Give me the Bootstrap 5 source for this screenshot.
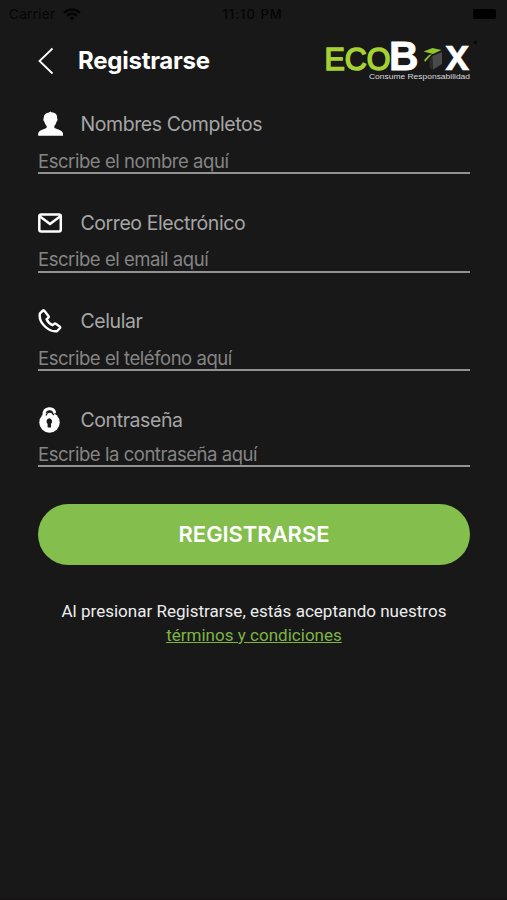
<!DOCTYPE html>
<html lang="es">
<head>
<meta charset="utf-8">
<meta name="viewport" content="width=device-width, initial-scale=1">
<title>Registrarse</title>
<link href="https://cdn.jsdelivr.net/npm/bootstrap@5.3.0/dist/css/bootstrap.min.css" rel="stylesheet">
<style>
body{background:#181818;color:#fff;font-family:Inter,"Liberation Sans",sans-serif;min-height:900px;border-bottom:1px solid #1c0f14}
.status-bar{height:28px;padding:0 11px 0 9px;color:#050505;font-size:13.5px;line-height:28px;grid-template-columns:1fr auto 1fr}
.carrier{letter-spacing:.3px}
.status-clock{font-size:13px;font-weight:500;letter-spacing:1px}
.battery{width:23px;height:10px;background:#000;border-radius:2px}
.screen{padding:0 37px 0 38px}
.top-row{height:66px}
.screen-title{font-size:24px;font-weight:700;letter-spacing:-.25px;line-height:30px;margin-left:24px}
.brand-logo{margin:0 -8px 0 0;overflow:visible}
.field{height:98.5px;padding-top:16px}
.field-label{height:28px;font-size:19.5px;color:#a6a6a6;line-height:28px;gap:17.5px;letter-spacing:-.42px}
.field-input,.field-input:focus{height:26px;margin-top:10px;padding:1px 0 0;border:0;border-bottom:2px solid #929292;border-radius:0;background:transparent;color:#fff;font-size:18.5px;letter-spacing:-.45px;line-height:23px;box-shadow:none}
.field-input::placeholder{color:#858585;opacity:1}
.field:last-of-type{height:98px}
.field:last-of-type .field-input{margin-top:7.5px}
.btn-register,.btn-register:hover{height:61px;margin-top:16px;background:#84be4d;color:#fff;font-size:22px;font-weight:600;letter-spacing:-.05px}
.terms{margin-top:34.5px;font-family:Roboto,sans-serif;font-size:17.05px;line-height:24px;color:#ededed}
.terms a{color:#7db544}
</style>
<script src="https://cdn.jsdelivr.net/npm/bootstrap@5.3.0/dist/js/bootstrap.bundle.min.js"></script>
</head>
<body>
<div class="status-bar d-grid align-items-center">
  <div class="d-flex align-items-center"><span class="carrier me-2">Carrier</span>
    <svg width="18" height="13" viewBox="0 0 19 14" fill="none" stroke="#050505" stroke-width="2.6"><path d="M1 5.2a12 12 0 0 1 17 0M4.2 8.4a7.500 7.500 0 0 1 10.600 0"/><path d="M6.800 10.600a4 4 0 0 1 5.400 0L9.500 13.500z" fill="#050505" stroke="none"/></svg>
  </div>
  <span class="status-clock">11:10 PM</span>
  <span class="battery ms-auto"></span>
</div>
<main class="screen">
  <header class="top-row d-flex align-items-center">
    <svg width="16" height="28" viewBox="0 0 16 28" fill="none" stroke="#fff" stroke-width="1.8"><path d="M14.500 1.500 1.500 14l13 12.500"/></svg>
    <h1 class="screen-title mb-0">Registrarse</h1>
    <svg class="brand-logo ms-auto" width="156" height="46" viewBox="322 38 156 46" font-family="Liberation Sans, sans-serif">
      <text x="324.500" y="70" font-size="30.500" fill="#a6d133" stroke="#a6d133" stroke-width="1.500" textLength="66" lengthAdjust="spacingAndGlyphs">ECO</text>
      <text x="389" y="70" font-size="40" font-weight="700" fill="#fff" stroke="#fff" stroke-width=".8" textLength="29.500" lengthAdjust="spacingAndGlyphs">B</text>
      <path d="m423.500 51.500 9-3.500 9 2-8.500 4z" fill="#8fc52e"/><path d="m432 54-7 8-.8-2 4.800-5z" fill="#8fc52e"/>
      <path d="m432 56 10-4v12l-9 5.500z" fill="#4a4a4a"/><path d="m429.500 59 3-3.500v14l-3-2z" fill="#2b2b2b"/>
      <text x="445" y="70" font-size="44" font-weight="700" fill="#fff" stroke="#fff" stroke-width=".3" textLength="24.500" lengthAdjust="spacingAndGlyphs">x</text>
      <text x="369" y="79" font-size="7.800" fill="#ddd" textLength="101" lengthAdjust="spacingAndGlyphs">Consume Responsabilidad</text>
      <circle cx="475.500" cy="42.500" r="1.800" fill="#090909"/>
    </svg>
  </header>
  <form>
    <div class="field">
      <label class="field-label d-flex align-items-center" for="nombre">
        <svg width="25" height="26" viewBox="0 0 25 26" fill="#fff"><path d="M5.800 7C5.800 3 8.200 1.800 11 1.400l1.700-.9.600.8c4 .3 6.200 2.200 5.800 6.200.8.500.5 2.600-.6 3.200-.4 2-1.300 3.300-2.200 4.200v1.600c1.500 2 8.400 2 8.700 6.100v2.200H.2v-2.200c.3-4.100 7-4.100 8.500-6.100v-1.600c-1-.9-1.900-2.200-2.300-4.200-1.100-.6-1.400-2.900-.6-3.700z"/></svg>
        <span>Nombres Completos</span></label>
      <input class="form-control field-input" id="nombre" placeholder="Escribe el nombre aquí">
    </div>
    <div class="field">
      <label class="field-label d-flex align-items-center" for="email">
        <svg width="25" height="22" viewBox="0 0 25 22" fill="none" stroke="#fff" stroke-width="2.500" stroke-linejoin="round"><rect x="1.300" y="2.400" width="21.500" height="17" rx="2"/><path d="m2 4.500 10 7.500L22 4.500"/></svg>
        <span>Correo Electrónico</span></label>
      <input class="form-control field-input" id="email" type="email" placeholder="Escribe el email aquí">
    </div>
    <div class="field">
      <label class="field-label d-flex align-items-center" for="celular">
        <svg width="25" height="24" viewBox="0 0 25 24" fill="none" stroke="#fff" stroke-width="2.400" stroke-linejoin="round"><path d="M5 1.500 2 4.300C1 8.500 3 13.500 6.500 17c3.700 3.800 8 5.800 12.500 5.200l3-3.200c.4-.6.300-1-.2-1.400l-4-2.900c-.6-.4-1.200-.3-1.600.1l-1.600 1.400c-2.600-1-4.800-3.200-6-6l1.800-1.500c.5-.4.500-.9.200-1.400L6.500 1.900C6.100 1.300 5.600 1.100 5 1.500z"/></svg>
        <span>Celular</span></label>
      <input class="form-control field-input" id="celular" type="tel" placeholder="Escribe el teléfono aquí">
    </div>
    <div class="field">
      <label class="field-label d-flex align-items-center" for="clave">
        <svg width="25" height="26" viewBox="0 0 25 26"><path d="M6 11V7.500C6 0 15.500.5 16.500 5" fill="none" stroke="#fff" stroke-width="3" stroke-linecap="round"/><circle cx="11.500" cy="15.500" r="10.200" fill="#fff"/><path d="M8 8.500c1-4 5-4 6.500-2L16 8" fill="none" stroke="#181818" stroke-width="1.200"/><path d="M11.300 11.300a3.200 3.200 0 0 1 1.700 5.600v3.600H9.600v-3.600a3.200 3.200 0 0 1 1.700-5.600z" fill="#181818"/></svg>
        <span>Contraseña</span></label>
      <input class="form-control field-input" id="clave" type="password" placeholder="Escribe la contraseña aquí">
    </div>
    <button class="btn btn-register rounded-pill w-100 border-0 d-block" type="button">REGISTRARSE</button>
  </form>
  <p class="terms text-center mb-0">Al presionar Registrarse, estás aceptando nuestros<br><a href="#">términos y condiciones</a></p>
</main>
</body>
</html>
